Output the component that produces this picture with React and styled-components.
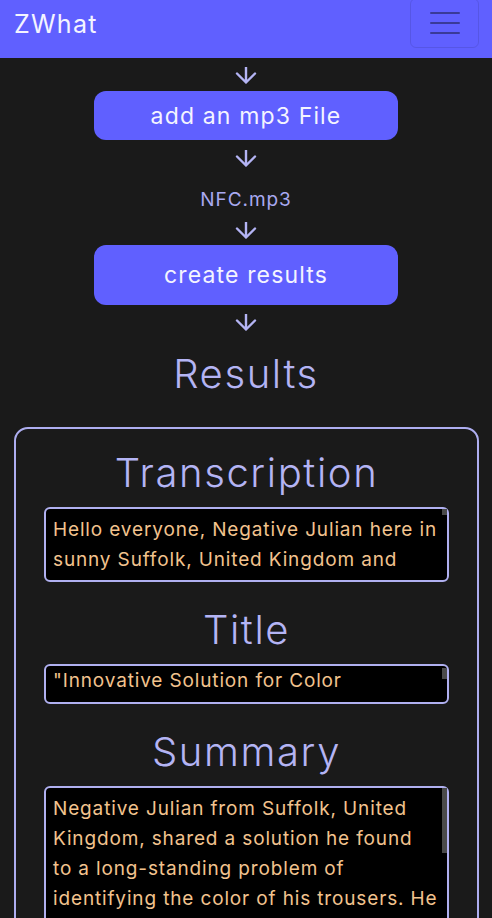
import React from "react";
import styled, { createGlobalStyle } from "styled-components";

const GlobalStyle = createGlobalStyle`
  html, body {
    margin: 0;
    padding: 0;
    background: #1a1a1a;
  }
  body {
    font-family: Inter, "Open Sans", sans-serif;
    color: #b4b4f4;
  }
`;

const Navbar = styled.nav`
  height: 58px;
  background: #6060ff;
  display: flex;
  justify-content: space-between;
  align-items: flex-start;
  padding: 0 13px 0 14px;
  box-sizing: border-box;
`;

const Brand = styled.a`
  font-size: 25px;
  font-weight: 400;
  letter-spacing: 0.05em;
  line-height: 48px;
  color: #f4f4ff;
  text-decoration: none;
`;

const Toggler = styled.button`
  width: 69px;
  height: 50px;
  margin-top: -2px;
  border: 1px solid rgba(0, 0, 0, 0.1);
  border-radius: 6px;
  background: transparent;
  display: flex;
  flex-direction: column;
  align-items: center;
  justify-content: center;
  gap: 8px;
  padding: 0;
`;

const TogglerLine = styled.span`
  width: 30px;
  height: 2px;
  border-radius: 1px;
  background: #3a3a98;
`;

const Main = styled.main`
  display: flex;
  flex-direction: column;
  align-items: center;
`;

const ArrowWrap = styled.div`
  margin-top: ${(p) => p.$top}px;
  height: 17px;
  display: flex;
`;

const StepButton = styled.button`
  margin-top: ${(p) => p.$top}px;
  width: 304px;
  height: ${(p) => p.$h}px;
  border: none;
  border-radius: 12px;
  background: #6060ff;
  color: #f4f4ff;
  font-family: inherit;
  font-size: 23px;
  font-weight: 400;
  letter-spacing: 0.05em;
`;

const FileName = styled.div`
  margin-top: 22px;
  font-size: 19px;
  letter-spacing: 0.05em;
  line-height: 22px;
  color: #a9a9f0;
`;

const Heading = styled.h2`
  margin: ${(p) => p.$top}px 0 0;
  font-size: 40px;
  line-height: 48px;
  font-weight: 300;
  letter-spacing: 0.04em;
  color: #b4b4f4;
  text-align: center;
`;

const Card = styled.section`
  margin: 29px 13px 0 14px;
  align-self: stretch;
  border: 2px solid #aeaef0;
  border-radius: 14px;
  padding: 0 28px 40px;
  display: flex;
  flex-direction: column;
`;

const OutputBox = styled.div`
  position: relative;
  margin-top: 10px;
`;

const Output = styled.textarea`
  display: block;
  box-sizing: border-box;
  width: 100%;
  height: ${(p) => p.$h}px;
  padding: ${(p) => p.$pt}px 8px 5px 7px;
  background: #000;
  color: #f2c38e;
  border: 2px solid #b0b0f0;
  border-radius: 6px;
  font-family: inherit;
  font-size: 19px;
  letter-spacing: 0.045em;
  line-height: 30px;
  resize: none;
  outline: none;
  overflow-y: hidden;
`;

const ScrollThumb = styled.span`
  position: absolute;
  right: 2px;
  top: ${(p) => p.$top}px;
  width: 5px;
  height: ${(p) => p.$h}px;
  background: #4a4a4a;
`;

function Arrow({ top }) {
  return (
    <ArrowWrap $top={top}>
      <svg width="22" height="17" viewBox="0 0 22 17" fill="none">
        <path
          d="M11 0.5V15.5M2 6.5L11 15.5L20 6.5"
          stroke="#b4b4f4"
          strokeWidth="2.4"
          strokeLinecap="round"
          strokeLinejoin="round"
        />
      </svg>
    </ArrowWrap>
  );
}

const transcription =
  "Hello everyone, Negative Julian here in sunny Suffolk, United Kingdom and today I want to share with you a little solution I found to a problem that has been bothering me for years: working out what colour my trousers are.";
const title =
  '"Innovative Solution for Color Identification: Negative Julian\'s Trouser Discovery"';
const summary =
  "Negative Julian from Suffolk, United Kingdom, shared a solution he found to\u00A0a long-standing problem of identifying the color of his trousers. He explained how a simple NFC tag stitched into each pair lets his phone read out the color, saving him from mismatched outfits.";

function Result({ title: heading, text, h, pt, thumbTop, thumbH }) {
  return (
    <>
      <Heading $top={heading === "Transcription" ? 20 : 24}>{heading}</Heading>
      <OutputBox>
        <Output $h={h} $pt={pt} readOnly value={text} />
        <ScrollThumb $top={thumbTop} $h={thumbH} />
      </OutputBox>
    </>
  );
}

export default function App() {
  return (
    <>
      <GlobalStyle />
      <Navbar>
        <Brand href="#">ZWhat</Brand>
        <Toggler aria-label="Toggle navigation">
          <TogglerLine />
          <TogglerLine />
          <TogglerLine />
        </Toggler>
      </Navbar>
      <Main>
        <Arrow top={9} />
        <StepButton $top={7} $h={49}>
          add an mp3 File
        </StepButton>
        <Arrow top={10} />
        <FileName>NFC.mp3</FileName>
        <Arrow top={11} />
        <StepButton $top={6} $h={60}>
          create results
        </StepButton>
        <Arrow top={9} />
        <Heading $top={19}>Results</Heading>
        <Card>
          <Result title="Transcription" text={transcription} h={75} pt={6} thumbTop={2} thumbH={6} />
          <Result title="Title" text={title} h={40} pt={0} thumbTop={4} thumbH={11} />
          <Result title="Summary" text={summary} h={200} pt={6} thumbTop={2} thumbH={65} />
        </Card>
      </Main>
    </>
  );
}
